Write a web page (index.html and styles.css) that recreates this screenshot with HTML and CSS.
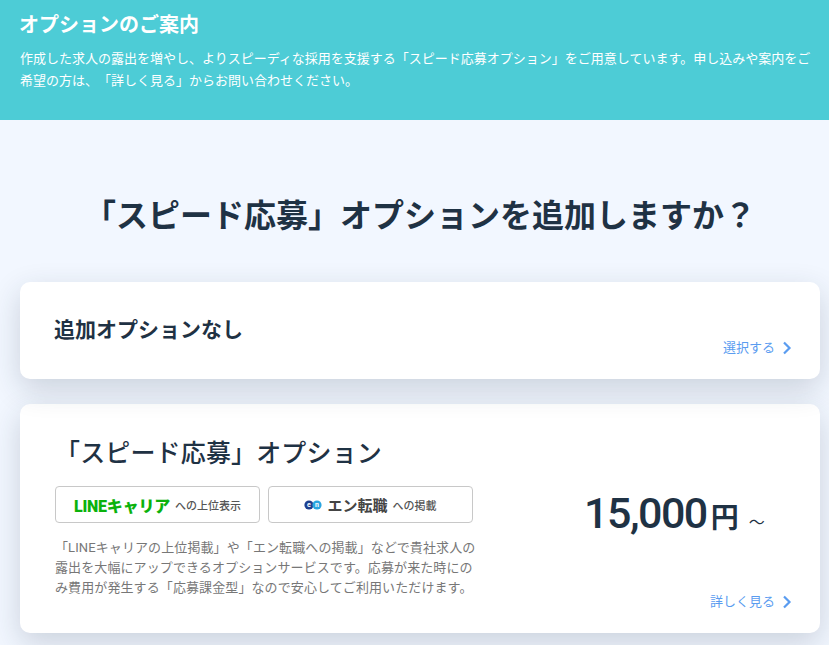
FILE: index.html
```html
<!DOCTYPE html>
<html lang="ja">
<head>
    <meta charset="UTF-8">
    <meta name="viewport" content="width=device-width, initial-scale=1.0">
    <title>オプションのご案内</title>
    <link rel="stylesheet" href="styles.css">
</head>
<body>
    <header class="intro">
        <h1>オプションのご案内</h1>
        <p>作成した求人の露出を増やし、よりスピーディな採用を支援する「スピード応募オプション」をご用意しています。申し込みや案内をご希望の方は、「詳しく見る」からお問い合わせください。</p>
    </header>

    <main class="content">
        <h2 class="question">「スピード応募」オプションを追加しますか？</h2>

        <section class="card card-none">
            <h3 class="none-title">追加オプションなし</h3>
            <a href="#" class="card-link">選択する
                <svg class="chevron" viewBox="0 0 10 14"><path d="M2 1.5 7.5 7 2 12.5" /></svg>
            </a>
        </section>

        <section class="card card-speed">
            <div class="speed-main">
                <div class="speed-info">
                    <h3 class="speed-title">「スピード応募」オプション</h3>
                    <div class="badges">
                        <div class="badge">
                            <span class="line-logo">LINEキャリア</span>
                            <span class="badge-text">への上位表示</span>
                        </div>
                        <div class="badge">
                            <svg class="en-logo" viewBox="0 0 18 10">
                                <circle cx="5" cy="5" r="4.6" fill="#1d3f8f" />
                                <circle cx="13" cy="5" r="4.6" fill="#2aa5e0" />
                                <text x="5" y="7.4" text-anchor="middle">e</text>
                                <text x="13" y="7.4" text-anchor="middle">n</text>
                            </svg>
                            <span class="en-name">エン転職</span>
                            <span class="badge-text">への掲載</span>
                        </div>
                    </div>
                    <p class="speed-text">「LINEキャリアの上位掲載」や「エン転職への掲載」などで貴社求人の露出を大幅にアップできるオプションサービスです。応募が来た時にのみ費用が発生する「応募課金型」なので安心してご利用いただけます。</p>
                </div>
                <div class="price">
                    <span class="price-num">15,000</span>
                    <span class="price-unit">円</span>
                    <span class="price-from">～</span>
                </div>
            </div>
            <a href="#" class="card-link">詳しく見る
                <svg class="chevron" viewBox="0 0 10 14"><path d="M2 1.5 7.5 7 2 12.5" /></svg>
            </a>
        </section>
    </main>
</body>
</html>
```

FILE: styles.css
```css
* {
    margin: 0;
    padding: 0;
    box-sizing: border-box;
}

html, body {
    height: 645px;
    overflow: hidden;
}

body {
    background: #f2f7ff;
    color: #1f3244;
    font-family: Roboto, "Noto Sans CJK JP", sans-serif;
    text-spacing-trim: space-all;
}

.intro {
    height: 120px;
    padding: 12px 9px 0 20px;
    background: #4dccd6;
    color: #fff;
}

.intro h1 {
    font-size: 20px;
    line-height: 27px;
    font-weight: 700;
    margin-left: -1px;
    margin-bottom: 9px;
}

.intro p {
    font-size: 13px;
    line-height: 21.5px;
}

.content {
    padding: 0 9px 0 20px;
}

.question {
    margin-top: 73px;
    font-size: 32px;
    line-height: 46px;
    font-weight: 700;
    text-align: center;
}

.card {
    background: #fff;
    border-radius: 10px;
    box-shadow: 0 10px 30px rgba(31, 50, 68, 0.19);
}

.card-none {
    height: 97px;
    margin-top: 43px;
    padding: 33px 35px 0 34px;
    position: relative;
}

.none-title {
    font-size: 21px;
    line-height: 30px;
    font-weight: 700;
}

.card-link {
    display: flex;
    align-items: center;
    gap: 7px;
    color: #5a9cf0;
    font-size: 13px;
    line-height: 19px;
    text-decoration: none;
}

.card-none .card-link {
    position: absolute;
    right: 28px;
    bottom: 22px;
}

.chevron {
    width: 10px;
    height: 14px;
    fill: none;
    stroke: #5a9cf0;
    stroke-width: 2.2;
}

.card-speed {
    height: 229px;
    margin-top: 25px;
    padding: 33px 28px 23px 35px;
    display: flex;
    flex-direction: column;
}

.speed-main {
    display: flex;
}

.speed-info {
    width: 419px;
}

.speed-title {
    font-size: 25px;
    line-height: 34px;
    font-weight: 500;
    letter-spacing: 0.15px;
}

.badges {
    display: flex;
    gap: 8px;
    margin-top: 15px;
}

.badge {
    width: 205px;
    height: 37px;
    display: flex;
    align-items: center;
    justify-content: center;
    gap: 5px;
    border: 1px solid #c8c8c8;
    border-radius: 4px;
}

.line-logo {
    color: #0bb20c;
    font-size: 16px;
    font-weight: 900;
    letter-spacing: -0.2px;
}

.en-logo {
    width: 18px;
    height: 10px;
}

.en-logo text {
    fill: #fff;
    font-size: 7px;
    font-weight: 700;
}

.en-name {
    color: #444;
    font-size: 15px;
    font-weight: 700;
}

.badge-text {
    color: #555;
    font-size: 11px;
    font-weight: 500;
}

.speed-text {
    margin-top: 15px;
    margin-right: -4px;
    color: #777;
    font-size: 13px;
    letter-spacing: 0.1px;
    line-height: 20px;
}

.price {
    flex: 1;
    display: flex;
    align-items: baseline;
    margin-top: 46px;
    padding-left: 110px;
}

.price-num {
    font-size: 43px;
    line-height: 60px;
    font-weight: 500;
    letter-spacing: -1.5px;
}

.price-unit {
    font-size: 28px;
    font-weight: 700;
    margin-left: 4px;
}

.price-from {
    font-size: 16px;
    margin-left: 10px;
}

.card-speed .card-link {
    justify-content: flex-end;
    margin-top: -6px;
}
```
